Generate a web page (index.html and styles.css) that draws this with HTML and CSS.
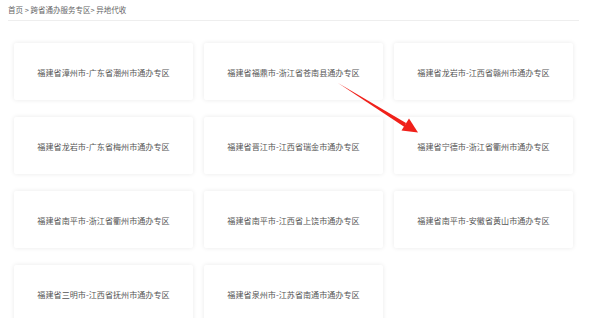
FILE: index.html
```html
<!DOCTYPE html>
<html lang="zh">
<head>
<meta charset="utf-8">
<link rel="stylesheet" href="styles.css">
</head>
<body>
<div class="page">
  <div class="crumb">首页 &gt; 跨省通办服务专区&gt; 异地代收</div>
  <div class="grid">
    <div class="card">福建省漳州市-广东省潮州市通办专区</div>
    <div class="card">福建省福鼎市-浙江省苍南县通办专区</div>
    <div class="card">福建省龙岩市-江西省赣州市通办专区</div>
    <div class="card">福建省龙岩市-广东省梅州市通办专区</div>
    <div class="card">福建省晋江市-江西省瑞金市通办专区</div>
    <div class="card">福建省宁德市-浙江省衢州市通办专区</div>
    <div class="card">福建省南平市-浙江省衢州市通办专区</div>
    <div class="card">福建省南平市-江西省上饶市通办专区</div>
    <div class="card">福建省南平市-安徽省黄山市通办专区</div>
    <div class="card">福建省三明市-江西省抚州市通办专区</div>
    <div class="card">福建省泉州市-江苏省南通市通办专区</div>
  </div>
  <svg class="arrow" width="595" height="318" viewBox="0 0 595 318">
    <polygon points="338,83 406,123 404.5,127" fill="#f0201a"/>
    <polygon points="418,132.5 401.5,130.5 409,118.5" fill="#f0201a"/>
  </svg>
</div>
</body>
</html>
```
FILE: styles.css
```css
html, body {
  margin: 0;
  padding: 0;
  background: #fff;
}
.page {
  position: relative;
  width: 595px;
  height: 318px;
  overflow: hidden;
  font-family: "Noto Sans CJK SC", "Liberation Sans", sans-serif;
}
.crumb {
  margin: 0 16px 0 8px;
  height: 20px;
  line-height: 20px;
  font-size: 7.5px;
  color: #666;
  border-bottom: 1px solid #eeeeee;
}
.grid {
  display: grid;
  grid-template-columns: repeat(3, 179px);
  column-gap: 11px;
  row-gap: 17px;
  padding: 22px 0 0 14px;
}
.card {
  height: 57px;
  background: #fff;
  border-radius: 2px;
  box-shadow: 0 0 5px rgba(0, 0, 0, 0.09);
  display: flex;
  align-items: center;
  justify-content: center;
  font-size: 8.1px;
  color: #555;
  padding-top: 1px;
  box-sizing: border-box;
}
.arrow {
  position: absolute;
  left: 0;
  top: 0;
  pointer-events: none;
}
```
